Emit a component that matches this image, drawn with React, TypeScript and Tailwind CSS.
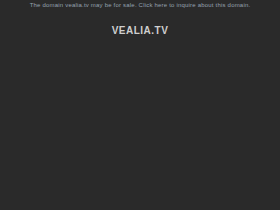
export default function App() {
    return (
        <div className="w-[280px] h-[210px] bg-[#2a2a2a] flex flex-col items-center font-['Liberation_Sans',Arial,sans-serif]">
            <div className="pt-[0.5px] text-[6px] leading-[8px] text-[#95a2b0] whitespace-nowrap tracking-[0.2px]">
                The domain vealia.tv may be for sale. Click here to inquire about this domain.
            </div>
            <h1 className="mt-[16.5px] text-[10px] leading-[12px] font-bold text-[#cfcfcf] tracking-[0.5px]">
                VEALIA.TV
            </h1>
        </div>
    );
}
